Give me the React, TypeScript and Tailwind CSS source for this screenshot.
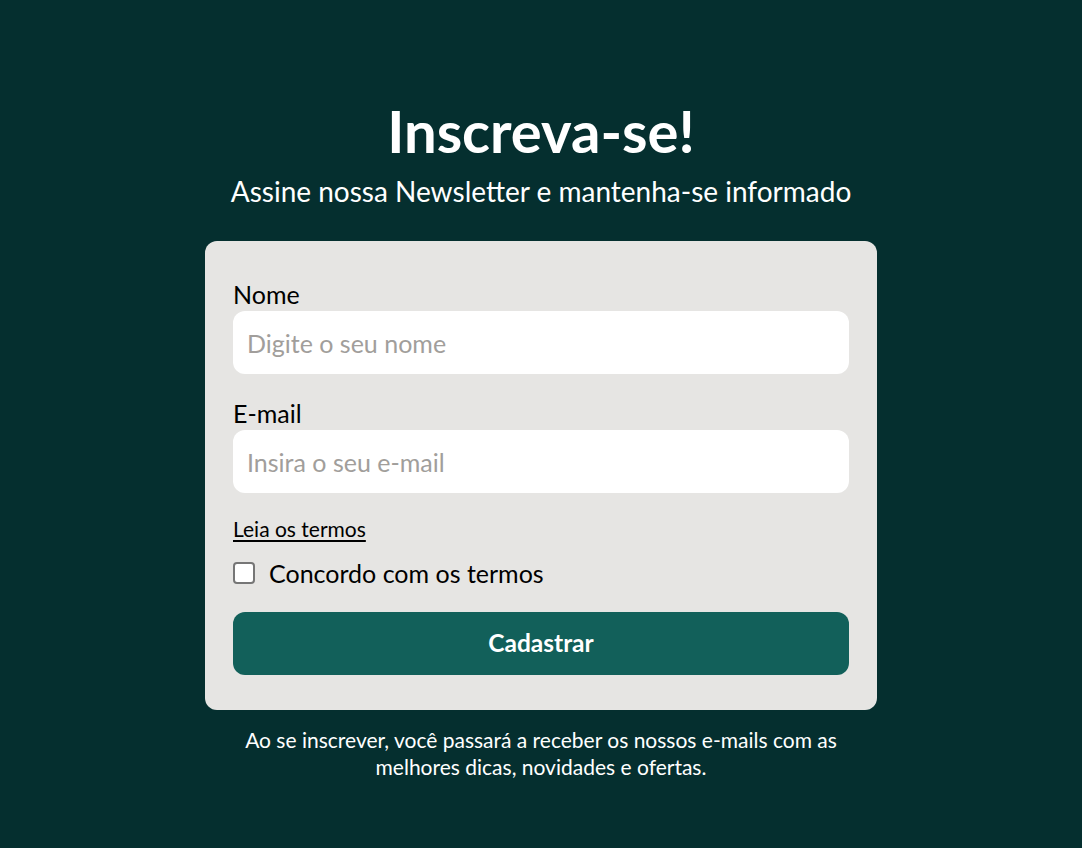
import { useState } from "react";

const App = () => {
  const [agree, setAgree] = useState(false);

  return (
    <div className="min-h-screen bg-[#052f2f] flex flex-col items-center pt-[97px] font-['Lato',sans-serif] text-black">
      {/* Header */}
      <h1 className="text-[58px] font-bold leading-[68px] text-white">
        Inscreva-se!
      </h1>
      <p className="text-[28px] leading-[34px] text-white mt-[9px]">
        Assine nossa Newsletter e mantenha-se informado
      </p>

      {/* Form */}
      <form
        className="w-[672px] bg-[#e6e5e3] rounded-xl mt-[33px] px-7 pt-[36px] pb-[35px]"
        onSubmit={(e) => e.preventDefault()}
      >
        <label htmlFor="nome" className="block text-[25px] leading-[34px]">
          Nome
        </label>
        <input
          id="nome"
          type="text"
          placeholder="Digite o seu nome"
          className="w-full h-[63px] rounded-xl bg-white px-[14px] text-[25px] outline-none placeholder:text-[#a19e9b]"
        />

        <label
          htmlFor="email"
          className="block text-[25px] leading-[34px] mt-[22px]"
        >
          E-mail
        </label>
        <input
          id="email"
          type="email"
          placeholder="Insira o seu e-mail"
          className="w-full h-[63px] rounded-xl bg-white px-[14px] text-[25px] outline-none placeholder:text-[#a19e9b]"
        />

        <a
          href="#"
          className="block w-fit mt-[23px] text-[21px] leading-[26px] underline underline-offset-[3px]"
        >
          Leia os termos
        </a>

        <label className="flex items-center gap-[14px] mt-[16px] text-[25px] leading-[30px] cursor-pointer">
          <input
            type="checkbox"
            checked={agree}
            onChange={(e) => setAgree(e.target.checked)}
            className="w-[22px] h-[22px] appearance-none rounded-[4px] border-2 border-[#767676] bg-white checked:bg-[#12605a]"
          />
          Concordo com os termos
        </label>

        <button
          type="submit"
          className="w-full h-[63px] mt-[24px] rounded-xl bg-[#12605a] text-white text-[24.5px] font-bold"
        >
          Cadastrar
        </button>
      </form>

      {/* Footer */}
      <p className="w-[620px] text-center text-white text-[21px] leading-[27px] mt-[16px]">
        Ao se inscrever, você passará a receber os nossos e-mails com as
        melhores dicas, novidades e ofertas.
      </p>
    </div>
  );
};

export default App;
